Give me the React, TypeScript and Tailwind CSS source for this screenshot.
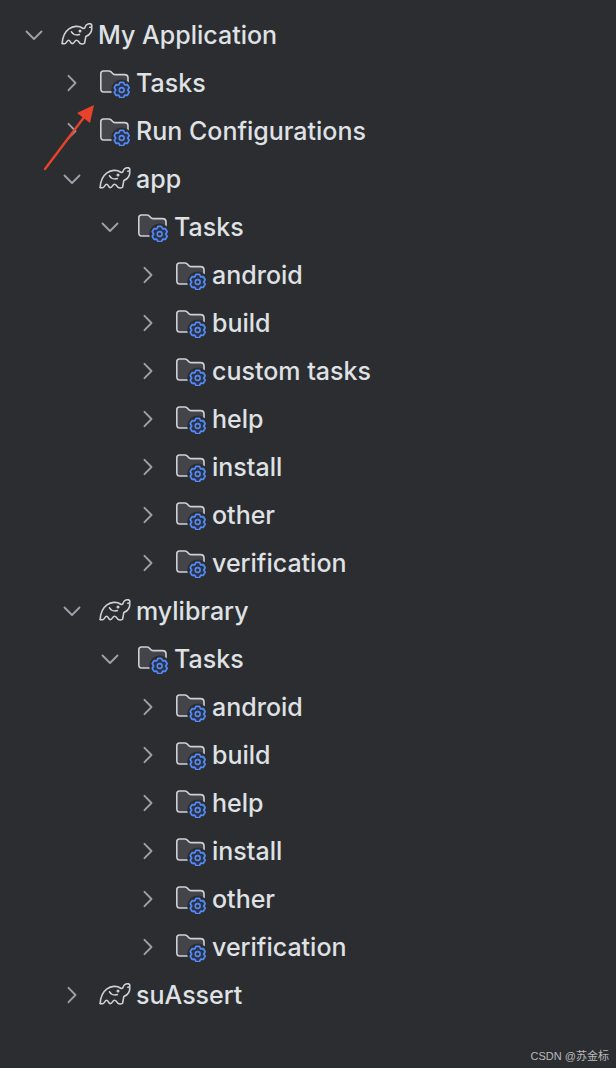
type Node = { label: string; kind: "gradle" | "folder"; open?: boolean; children?: Node[] };

const leaf = (label: string): Node => ({ label, kind: "folder" });

const tree: Node = {
  label: "My Application",
  kind: "gradle",
  open: true,
  children: [
    leaf("Tasks"),
    leaf("Run Configurations"),
    {
      label: "app",
      kind: "gradle",
      open: true,
      children: [
        {
          label: "Tasks",
          kind: "folder",
          open: true,
          children: ["android", "build", "custom tasks", "help", "install", "other", "verification"].map(leaf),
        },
      ],
    },
    {
      label: "mylibrary",
      kind: "gradle",
      open: true,
      children: [
        {
          label: "Tasks",
          kind: "folder",
          open: true,
          children: ["android", "build", "help", "install", "other", "verification"].map(leaf),
        },
      ],
    },
    { label: "suAssert", kind: "gradle" },
  ],
};

function Chevron({ open }: { open?: boolean }) {
  return (
    <svg width="20" height="20" viewBox="0 0 20 20" fill="none" stroke="#9da0a8" strokeWidth="1.9" strokeLinecap="round" strokeLinejoin="round">
      {open ? <path d="M2.5 6.5 L10 14 L17.5 6.5" /> : <path d="M6.5 2.8 L13.5 10 L6.5 17.2" />}
    </svg>
  );
}

function GradleIcon() {
  return (
    <svg width="32" height="24" viewBox="0 0 32 24" fill="none" stroke="#ced0d6" strokeWidth="1.6" strokeLinecap="round" strokeLinejoin="round">
      <path d="M1.2 20.5 C1.5 14 3.5 9 8 5.8 C12 3 18 2.5 21.3 5 C22.8 6 24 5.3 24.3 3.6 C25 1 29 -0.2 30.4 1.5 C31.4 3 30.4 4.6 28.8 4.2" />
      <path d="M30.6 4.2 C31.4 8 29 12 24.8 13.6 L23.6 20.2 C23 21.2 20 21.2 19 20.4 C17.8 18.6 17 17.2 15.4 17.2 C13.6 17.2 13.4 20.6 11.4 20.6 C9.4 20.6 9.4 17.2 7.6 17.2 C5.8 17.2 5.6 20.8 3.4 20.8 C2.4 20.8 1.6 20.8 1.2 20.5" />
      <circle cx="19" cy="8" r="0.7" fill="#ced0d6" />
      <path d="M10.5 8.8 C12 11.5 15.5 12.4 18.4 11.6" />
    </svg>
  );
}

// six-toothed gear outline around (cx, cy)
function gearPath(cx: number, cy: number, outer: number, inner: number) {
  const pts: string[] = [];
  for (let i = 0; i < 6; i++) {
    const a = -90 + i * 60;
    for (const [d, r] of [[-30, inner], [-13, outer], [13, outer]] as const) {
      const t = ((a + d) * Math.PI) / 180;
      pts.push(`${(cx + r * Math.cos(t)).toFixed(2)} ${(cy + r * Math.sin(t)).toFixed(2)}`);
    }
  }
  return `M${pts.join(" L")} Z`;
}

function FolderIcon() {
  return (
    <svg width="32" height="30" viewBox="1 0 32 30" fill="none">
      <path d="M5.5 3 H11 C12.5 3 13.3 3.8 14.2 5 C15 6.1 15.8 6.6 17 6.6 H26.5 C28.6 6.6 30 8 30 10 V20 C30 22.6 28.6 24 26.5 24 H5.5 C3.4 24 2.8 22.6 2.8 20.5 V5.8 C2.8 4 3.6 3 5.5 3 Z" fill="#43454a" stroke="#ced0d6" strokeWidth="1.6" />
      <circle cx="23.7" cy="22" r="10.5" fill="#2b2d30" />
      <path d={gearPath(23.7, 22, 7.8, 6)} fill="#2a3348" stroke="#548af7" strokeWidth="1.7" strokeLinejoin="round" />
      <circle cx="23.7" cy="22" r="2.4" fill="#2b2d30" stroke="#548af7" strokeWidth="1.6" />
    </svg>
  );
}

function Row({ node }: { node: Node }) {
  return (
    <div>
      <div className="flex h-12 items-center">
        <div className="w-5 shrink-0">
          <Chevron open={node.open} />
        </div>
        <div className="ml-[17px] flex w-8 shrink-0 justify-center">
          {node.kind === "gradle" ? <GradleIcon /> : <FolderIcon />}
        </div>
        <span className="ml-[5.5px] text-[25px] leading-none font-[450] whitespace-nowrap text-[#dfe1e5]">{node.label}</span>
      </div>
      {node.children && (
        <div className="pl-[38px]">
          {node.children.map((c, i) => (
            <Row key={i} node={c} />
          ))}
        </div>
      )}
    </div>
  );
}

export default function App() {
  return (
    <div className="relative h-[1068px] w-[616px] overflow-hidden bg-[#2b2d30] pt-[11px] pl-[23.5px] font-['Inter','Liberation_Sans',sans-serif]">
      <Row node={tree} />
      {/* red annotation arrow */}
      <svg className="absolute top-[100px] left-[40px]" width="60" height="75" viewBox="0 0 60 75">
        <path d="M5 69 L48 12" stroke="#e8432a" strokeWidth="2.4" strokeLinecap="round" />
        <path d="M54 5 L50 23 L37 13 Z" fill="#e8432a" />
      </svg>
      <div className="absolute right-[7px] bottom-[4px] text-[11px] text-[#b9babc] font-['Liberation_Sans','Noto_Sans_CJK_SC',sans-serif]">CSDN @苏金标</div>
    </div>
  );
}
